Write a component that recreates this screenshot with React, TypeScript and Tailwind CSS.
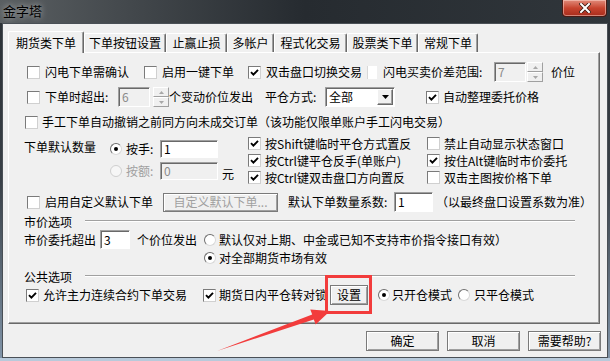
import React from 'react';

const Check = ({ on, faint }: { on?: boolean; faint?: boolean }) =>
  faint ? (
    <span className="h-[13px] w-[10px] shrink-0 border-l border-[#d8d8d8] bg-white" />
  ) : (
    <span className="flex h-[13px] w-[13px] shrink-0 items-center justify-center border border-t-[#7a7a7a] border-l-[#7a7a7a] border-r-[#d0d0d0] border-b-[#d0d0d0] bg-white">
      {on && (
        <svg width="9" height="9" viewBox="0 0 9 9">
          <path d="M1 4.2 L3.4 6.7 L8 1.8" fill="none" stroke="#000" strokeWidth="1.9" />
        </svg>
      )}
    </span>
  );

const Radio = ({ on, off }: { on?: boolean; off?: boolean }) => (
  <span
    className={`flex h-[12px] w-[12px] shrink-0 items-center justify-center rounded-full border ${
      off ? 'border-[#cfcfcf] bg-[#f6f6f6]' : 'border-t-[#6e6e6e] border-l-[#6e6e6e] border-r-[#d8d8d8] border-b-[#d8d8d8] bg-white'
    }`}
  >
    {on && <span className="h-[4px] w-[4px] rounded-full bg-black" />}
  </span>
);

const Field = ({ v, cls, off }: { v: string; cls: string; off?: boolean }) => (
  <div
    className={`flex items-center pl-[3px] border border-t-[#a0a0a0] border-l-[#a0a0a0] border-r-white border-b-white shadow-[inset_1px_1px_0_#696969] ${cls} ${
      off ? 'bg-[#f0f0f0] text-[#8a8a8a]' : 'bg-white text-black'
    }`}
  >
    {v}
  </div>
);

const Spin = () => (
  <div className="flex h-[20px] w-[16px] shrink-0 flex-col">
    <div className="flex flex-1 items-center justify-center border border-t-white border-l-white border-r-[#a0a0a0] border-b-[#a0a0a0] bg-[#f0f0f0]">
      <svg width="5" height="3"><path d="M0 3 L2.5 0 L5 3Z" fill="#a8a8a8" /></svg>
    </div>
    <div className="flex flex-1 items-center justify-center border border-t-white border-l-white border-r-[#a0a0a0] border-b-[#a0a0a0] bg-[#f0f0f0]">
      <svg width="5" height="3"><path d="M0 0 L2.5 3 L5 0Z" fill="#a8a8a8" /></svg>
    </div>
  </div>
);

const Btn = ({ children, cls, off }: { children: React.ReactNode; cls: string; off?: boolean }) => (
  <div
    className={`flex shrink-0 items-center justify-center border border-[#7a7a7a] bg-[#f0f0f0] shadow-[inset_1px_1px_0_#ffffff,inset_-1px_-1px_0_#a0a0a0] ${cls} ${
      off ? 'text-[#a0a0a0]' : 'text-black'
    }`}
  >
    {children}
  </div>
);

const Opt = ({ on, label, cls = '', gap = 'ml-[5px]' }: { on?: boolean; label: string; cls?: string; gap?: string }) => (
  <div className={`flex shrink-0 items-center ${cls}`}>
    <Check on={on} />
    <span className={`${gap} whitespace-nowrap`}>{label}</span>
  </div>
);

const Group = ({ label }: { label: string }) => (
  <div className="mt-[3px] flex h-[14px] items-center pl-[15px]">
    <span>{label}</span>
    <div className="ml-[13px] mr-[24px] mt-[-2px] h-[2px] flex-1 border-t border-b border-t-[#a0a0a0] border-b-white" />
  </div>
);

const tabs = [
  { t: '下单按钮设置', w: 'w-[82px]' },
  { t: '止赢止损', w: 'w-[61px]' },
  { t: '多帐户', w: 'w-[47px]' },
  { t: '程式化交易', w: 'w-[73px]' },
  { t: '股票类下单', w: 'w-[71px]' },
  { t: '常规下单', w: 'w-[60px]' },
];

export default function App() {
  return (
    <div className="relative flex h-[361px] w-[610px] flex-col overflow-hidden bg-linear-to-b from-[#2b3035] via-[#3a4148] to-[#8296aa] font-['Noto_Sans_CJK_SC','Noto_Sans',sans-serif] text-[12px] leading-[14px] text-black">
      {/* title bar */}
      <div className="flex h-[23px] shrink-0 items-start justify-between bg-linear-to-r from-[#5a5f62] via-[#262b30] to-[#30363b]">
        <span className="ml-[3px] mt-[3px] text-[13px] leading-[16px] text-black [text-shadow:0_0_6px_rgba(255,255,255,0.7)]">
          金字塔
        </span>
        <div className="mr-[3px] flex h-[17px] w-[45px] items-center justify-center rounded-b-[4px] border border-t-0 border-[#4a1a14] bg-linear-to-b from-[#e08a7a] via-[#c7442f] to-[#a82c1c] shadow-[inset_0_0_0_1px_rgba(255,220,210,0.5)]">
          <svg width="12" height="10" viewBox="0 0 12 10">
            <path d="M2 1 L10 9 M10 1 L2 9" stroke="#3a1a12" strokeWidth="3.6" strokeLinecap="square" />
            <path d="M2 1 L10 9 M10 1 L2 9" stroke="#fff" strokeWidth="2" strokeLinecap="square" />
          </svg>
        </div>
      </div>

      {/* client area */}
      <div className="mx-[2px] flex h-[335px] shrink-0 flex-col border border-[#4a5056] bg-[#f0f0f0]">
        {/* tabs */}
        <div className="ml-[5px] mt-[7px] flex h-[21px] items-end">
          <div className="relative z-10 -mb-px flex h-[22px] w-[76px] items-center justify-center rounded-t-[2px] border-t border-l border-r border-t-white border-l-white border-r-[#696969] bg-[#f0f0f0] shadow-[inset_-1px_0_0_#a0a0a0]">
            期货类下单
          </div>
          {tabs.map((t) => (
            <div
              key={t.t}
              className={`flex h-[19px] ${t.w} items-center justify-center rounded-t-[2px] border-t border-l border-r border-t-white border-l-white border-r-[#696969] shadow-[inset_-1px_0_0_#a0a0a0]`}
            >
              {t.t}
            </div>
          ))}
        </div>

        {/* panel */}
        <div className="ml-[5px] flex h-[272px] w-[592px] flex-col border border-t-white border-l-white border-r-[#696969] border-b-[#696969] shadow-[inset_-1px_-1px_0_#a0a0a0]">
          {/* row 1 */}
          <div className="mt-[9px] flex h-[20px] items-center pl-[18px]">
            <Opt label="闪电下单需确认" cls="w-[117px]" />
            <Opt label="启用一键下单" cls="w-[104px]" />
            <Opt on label="双击盘口切换交易" cls="w-[119px]" />
            <div className="flex w-[127px] items-center">
              <Check faint />
              <span className="ml-[6px] whitespace-nowrap">闪电买卖价差范围:</span>
            </div>
            <Field v="7" off cls="h-[20px] w-[32px]" />
            <div className="ml-px"><Spin /></div>
            <span className="ml-[8px]">价位</span>
          </div>

          {/* row 2 */}
          <div className="mt-[5px] flex h-[20px] items-center pl-[18px]">
            <Opt label="下单时超出:" cls="w-[91px]" />
            <Field v="6" off cls="h-[20px] w-[32px]" />
            <div className="ml-[3px]"><Spin /></div>
            <span className="w-[96px] whitespace-nowrap">个变动价位发出</span>
            <span className="w-[60px] whitespace-nowrap">平仓方式:</span>
            <div className="flex h-[20px] w-[70px] items-center justify-between border border-t-[#a0a0a0] border-l-[#a0a0a0] border-r-white border-b-white bg-white shadow-[inset_1px_1px_0_#696969]">
              <span className="pl-[3px]">全部</span>
              <div className="mr-px flex h-[16px] w-[16px] items-center justify-center border border-t-white border-l-white border-r-[#696969] border-b-[#696969] bg-[#f0f0f0] shadow-[inset_-1px_-1px_0_#a0a0a0]">
                <svg width="7" height="4"><path d="M0 0 L3.5 4 L7 0Z" fill="#000" /></svg>
              </div>
            </div>
            <Opt on label="自动整理委托价格" cls="ml-[31px]" gap="ml-[4px]" />
          </div>

          {/* row 3 */}
          <div className="mt-[5px] flex h-[20px] items-center pl-[16px]">
            <Opt label="手工下单自动撤销之前同方向未成交订单（该功能仅限单账户手工闪电交易）" gap="ml-[4px]" />
          </div>

          {/* default quantity block */}
          <div className="mt-[3px] flex h-[50px] pl-[15px]">
            <div className="mt-[3px] h-[17px] w-[86px] leading-[17px]">下单默认数量</div>
            <div className="flex w-[138px] flex-col">
              <div className="mt-[5px] flex h-[18px] items-center">
                <Radio on />
                <span className="ml-[4px] w-[34px]">按手:</span>
                <Field v="1" cls="h-[18px] w-[58px]" />
              </div>
              <div className="mt-[4px] flex h-[18px] items-center">
                <Radio off />
                <span className="ml-[4px] w-[34px] text-[#a0a0a0]">按额:</span>
                <Field v="0" off cls="h-[18px] w-[58px]" />
                <span className="ml-[4px] self-end leading-[12px]">元</span>
              </div>
            </div>
            <div className="flex w-[179px] flex-col">
              <Opt on label="按Shift键临时平仓方式置反" cls="h-[17px]" gap="ml-[4px]" />
              <Opt on label="按Ctrl键平仓反手(单账户)" cls="h-[17px]" gap="ml-[4px]" />
              <Opt on label="按Ctrl键双击盘口方向置反" cls="h-[17px]" gap="ml-[4px]" />
            </div>
            <div className="flex flex-col">
              <Opt label="禁止自动显示状态窗口" cls="h-[17px]" gap="ml-[4px]" />
              <Opt on label="按住Alt键临时市价委托" cls="h-[17px]" gap="ml-[4px]" />
              <Opt label="双击主图按价格下单" cls="h-[17px]" gap="ml-[4px]" />
            </div>
          </div>

          {/* row custom default */}
          <div className="mt-[7px] flex h-[20px] items-center pl-[18px]">
            <Opt label="启用自定义默认下单" cls="w-[136px]" />
            <Btn off cls="h-[19px] w-[115px]">自定义默认下单...</Btn>
            <span className="ml-[10px] w-[106px] whitespace-nowrap">默认下单数量系数:</span>
            <Field v="1" cls="h-[20px] w-[39px]" />
            <span className="ml-[3px] whitespace-nowrap">（以最终盘口设置系数为准）</span>
          </div>

          <Group label="市价选项" />

          <div className="mt-[1px] flex h-[19px] items-center pl-[15px]">
            <span className="w-[76px]">市价委托超出</span>
            <Field v="3" cls="h-[19px] w-[30px]" />
            <span className="ml-[7px] w-[67px] whitespace-nowrap">个价位发出</span>
            <Radio />
            <span className="ml-[3px] whitespace-nowrap">默认仅对上期、中金或已知不支持市价指令接口有效）</span>
          </div>
          <div className="flex h-[18px] items-center pl-[195px]">
            <Radio on />
            <span className="ml-[3px]">对全部期货市场有效</span>
          </div>

          <Group label="公共选项" />

          <div className="mt-[1px] flex h-[20px] items-center pl-[17px]">
            <Opt on label="允许主力连续合约下单交易" cls="w-[177px]" gap="ml-[4px]" />
            <Opt on label="期货日内平仓转对锁" cls="w-[127px]" gap="ml-[3px]" />
            <Btn cls="h-[20px] w-[38px]">设置</Btn>
            <div className="ml-[10px] flex w-[80px] items-center">
              <Radio on />
              <span className="ml-[2px]">只开仓模式</span>
            </div>
            <Radio />
            <span className="ml-[4px]">只平仓模式</span>
          </div>
        </div>

        {/* bottom buttons */}
        <div className="mt-[7px] flex h-[20px] justify-end gap-[8px] pr-[6px]">
          <Btn cls="h-[20px] w-[73px] border-[#3c3c3c]">确定</Btn>
          <Btn cls="h-[20px] w-[73px]">取消</Btn>
          <Btn cls="h-[20px] w-[73px]">需要帮助?</Btn>
        </div>
      </div>
      <div className="h-[3px] bg-[#b8cadb]" />

      {/* annotation */}
      <div className="pointer-events-none absolute left-[325px] top-[275px] h-[39px] w-[47px] border-[3px] border-[#f23c3c]" />
      <svg className="pointer-events-none absolute left-0 top-0" width="610" height="361">
        <polygon points="217,351 312.2,314.6 310.3,309.4 330,311 315.7,324.6 313.8,319.4" fill="#f23c3c" />
      </svg>
    </div>
  );
}
